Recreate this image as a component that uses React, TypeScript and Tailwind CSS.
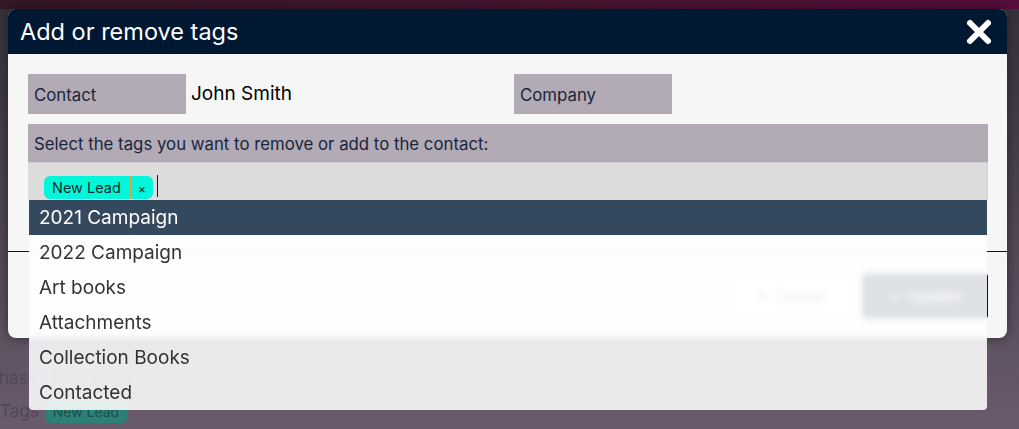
import React from 'react'

const tags = ['2021 Campaign', '2022 Campaign', 'Art books', 'Attachments', 'Collection Books', 'Contacted']

const font = { fontFamily: 'Inter, Roboto, "Noto Sans", sans-serif' }

const CloseIcon = () => (
  <svg width="28" height="28" viewBox="0 0 28 28" fill="none">
    <path d="M5 5 L23 23 M23 5 L5 23" stroke="white" strokeWidth="6" strokeLinecap="round" />
  </svg>
)

// page behind the dialog, already dimmed by the backdrop
const PageBehind = () => (
  <div className="flex flex-col h-full">
    <div className="h-[9px] bg-gradient-to-r from-[#351827] to-[#570d3b]" />
    <div className="flex-1 flex flex-col justify-end pb-[4px] bg-gradient-to-b from-[#37323b] via-[#4f4554] to-[#6a5b6d]">
      <div className="flex items-center gap-[14px] h-[40px] ml-[-12px] text-[17px] text-[#51455a]">
        <span>Phase</span>
        <span>New Lead</span>
      </div>
      <div className="flex items-center gap-[6px] h-[26px] text-[17px] text-[#51455a]">
        <span>Tags</span>
        <span className="px-[8px] h-[22px] leading-[22px] rounded-[5px] bg-[#2c8078] text-[#1d4f4b] text-[14px]">New Lead</span>
      </div>
    </div>
  </div>
)

export default function App() {
  return (
    <div className="relative w-[1019px] h-[429px] overflow-hidden bg-[#6a5b6d]" style={font}>
      <PageBehind />

      <div className="absolute left-[8px] top-[9px] w-[999px] h-[329px] rounded-[8px] overflow-hidden bg-[#f6f6f6] shadow-[0_0_12px_rgba(0,0,0,0.45)] flex flex-col">
        <div className="h-[45px] bg-[#011832] flex items-center justify-between pl-[12px] pr-[14px]">
          <h2 className="text-white text-[23.5px] leading-none">Add or remove tags</h2>
          <CloseIcon />
        </div>

        <div className="px-[20px] pt-[20px] h-[197px]">
          <div className="flex items-center h-[40px]">
            <div className="w-[486px] flex items-center gap-[5px]">
              <div className="w-[158px] h-[40px] bg-[#b2abb6] text-[#18253b] text-[16.8px] flex items-center px-[6px] pt-[3px]">Contact</div>
              <span className="text-[19px] text-black pt-[1px]">John Smith</span>
            </div>
            <div className="w-[158px] h-[40px] bg-[#b2abb6] text-[#18253b] text-[16.8px] flex items-center px-[6px] pt-[3px]">Company</div>
          </div>

          <div className="mt-[10px] w-[960px]">
            <div className="h-[39px] bg-[#b2abb6] text-[#18253b] text-[16.8px] flex items-center px-[6px] pt-[3px] border-b border-[#cfcdd3]">
              Select the tags you want to remove or add to the contact:
            </div>
            <div className="h-[37px] bg-[#dcdcdc] flex items-end pb-[1px] pl-[16px] border-r border-[#d2d2d8]">
              <div className="flex items-center h-[23px] rounded-[6px] bg-[#00f8da] text-[#1a2b2b]">
                <span className="text-[14.5px] pl-[8px] pr-[9px]">New Lead</span>
                <span className="w-px h-full bg-[#e0a040]" />
                <span className="text-[12px] px-[7px] pt-[3px]">×</span>
              </div>
              <span className="ml-[4px] mb-[2px] w-px h-[22px] bg-[#1a1a1a]" />
            </div>
          </div>
        </div>

        <div className="flex-1 border-t border-[#011832] flex justify-end items-start pt-[21px] pr-[19px] gap-[10px]">
          <button className="w-[122px] h-[46px] rounded-[4px] border border-[#dddddd] bg-white text-[#555] text-[16px]">✕ Cancel</button>
          <button className="w-[126px] h-[46px] rounded-[4px] bg-[#011832] text-white text-[16px]">✓ Update</button>
        </div>
      </div>

      <ul className="absolute left-[29px] top-[200px] w-[958px] rounded-b-[4px] bg-white/[0.87] backdrop-blur-[3px] overflow-hidden">
        {tags.map((t, i) => (
          <li
            key={t}
            className={
              i === 0
                ? 'h-[35px] flex items-center px-[10px] pt-[2px] text-[19px] bg-[#34495e] text-white'
                : 'h-[35px] flex items-center px-[10px] pt-[2px] text-[19px] text-[#333333]'
            }
          >
            {t}
          </li>
        ))}
      </ul>
    </div>
  )
}
